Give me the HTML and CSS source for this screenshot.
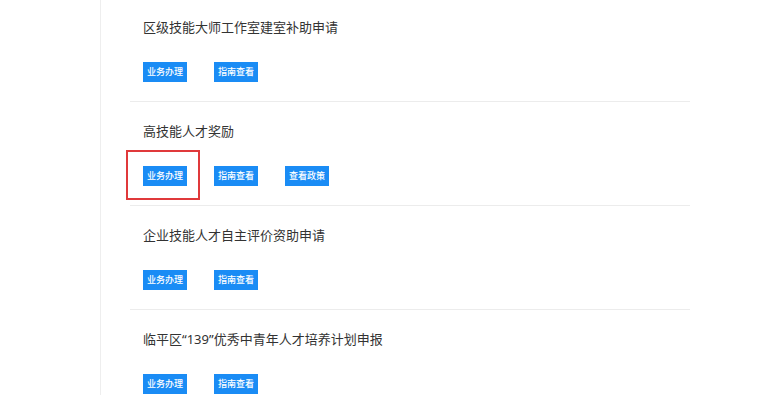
FILE: index.html
```html
<!DOCTYPE html>
<html lang="zh-CN">
<head>
<meta charset="utf-8">
<link rel="stylesheet" href="styles.css">
</head>
<body>
<div class="page">
  <div class="panel">
    <ul class="list">
      <li class="item">
        <div class="title">区级技能大师工作室建室补助申请</div>
        <div class="actions">
          <a class="btn">业务办理</a>
          <a class="btn">指南查看</a>
        </div>
      </li>
      <li class="item">
        <div class="title">高技能人才奖励</div>
        <div class="actions">
          <a class="btn highlight">业务办理</a>
          <a class="btn">指南查看</a>
          <a class="btn">查看政策</a>
        </div>
      </li>
      <li class="item">
        <div class="title">企业技能人才自主评价资助申请</div>
        <div class="actions">
          <a class="btn">业务办理</a>
          <a class="btn">指南查看</a>
        </div>
      </li>
      <li class="item">
        <div class="title">临平区“139”优秀中青年人才培养计划申报</div>
        <div class="actions">
          <a class="btn">业务办理</a>
          <a class="btn">指南查看</a>
        </div>
      </li>
    </ul>
  </div>
</div>
</body>
</html>
```
FILE: styles.css
```css
html, body {
  margin: 0;
  padding: 0;
  background: #ffffff;
  overflow: hidden;
}
body {
  font-family: "Noto Sans", "Noto Sans CJK SC", sans-serif;
  color: #333333;
}
.page {
  padding-left: 100px;
  height: 397px;
}
.panel {
  border-left: 1px solid #eeeeee;
  height: 100%;
  padding-left: 29px;
}
.list {
  list-style: none;
  margin: -2px 0 0 0;
  padding: 0;
  width: 560px;
}
.item {
  padding: 19px 0 19px 13px;
  border-bottom: 1px solid #ececec;
}
.title {
  font-size: 13px;
  line-height: 20px;
  height: 20px;
  color: #333333;
}
.actions {
  display: flex;
  gap: 27px;
  margin-top: 25px;
}
.btn {
  position: relative;
  display: block;
  width: 44px;
  height: 20px;
  line-height: 20px;
  text-align: center;
  font-size: 9px;
  font-weight: 500;
  color: #ffffff;
  background: #1a8cf5;
  white-space: nowrap;
}
.highlight::after {
  content: "";
  position: absolute;
  left: -17px;
  top: -16px;
  right: -13px;
  bottom: -14px;
  border: 2px solid #e0393b;
}
```
